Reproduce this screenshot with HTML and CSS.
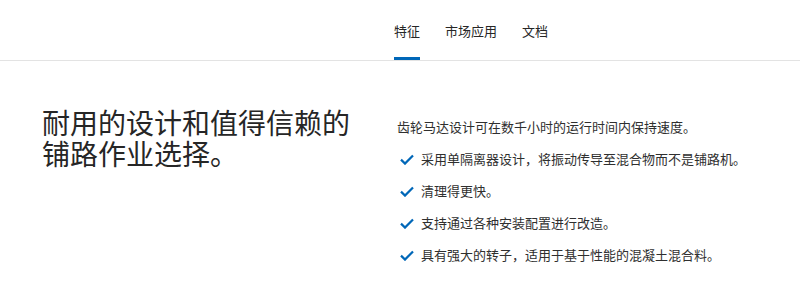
FILE: index.html
```html
<!DOCTYPE html>
<html lang="zh-CN">
<head>
    <meta charset="UTF-8">
    <meta name="viewport" content="width=device-width, initial-scale=1.0">
    <title>铺路作业</title>
    <link rel="stylesheet" href="styles.css">
</head>
<body>
    <header class="tab-bar">
        <nav class="tabs">
            <a class="tab active" href="#">特征</a>
            <a class="tab" href="#">市场应用</a>
            <a class="tab" href="#">文档</a>
        </nav>
    </header>

    <main class="feature">
        <h1 class="feature-title">
            <span>耐用的设计和值得信赖的</span>
            <span>铺路作业选择。</span>
        </h1>
        <div class="feature-body">
            <p class="lead">齿轮马达设计可在数千小时的运行时间内保持速度。</p>
            <ul class="checklist">
                <li>
                    <svg viewBox="0 0 14 11"><path d="M1 5.6l4 4L13 1.4"/></svg>
                    采用单隔离器设计，将振动传导至混合物而不是铺路机。
                </li>
                <li>
                    <svg viewBox="0 0 14 11"><path d="M1 5.6l4 4L13 1.4"/></svg>
                    清理得更快。
                </li>
                <li>
                    <svg viewBox="0 0 14 11"><path d="M1 5.6l4 4L13 1.4"/></svg>
                    支持通过各种安装配置进行改造。
                </li>
                <li>
                    <svg viewBox="0 0 14 11"><path d="M1 5.6l4 4L13 1.4"/></svg>
                    具有强大的转子，适用于基于性能的混凝土混合料。
                </li>
            </ul>
        </div>
    </main>
</body>
</html>
```

FILE: styles.css
```css
body {
    margin: 0;
    font-family: "Noto Sans CJK SC", "Noto Sans", sans-serif;
    color: #262626;
    background-color: #fff;
}
.tab-bar {
    height: 60px;
    border-bottom: 1px solid #e3e3e3;
}
.tabs {
    display: flex;
    gap: 25px;
    height: 100%;
    padding-left: 394px;
}
.tab {
    display: flex;
    align-items: center;
    font-size: 13px;
    color: #262626;
    text-decoration: none;
    border-bottom: 3px solid transparent;
    padding-top: 3px;
    box-sizing: border-box;
}
.tab.active {
    border-bottom-color: #0067b8;
}
.feature {
    display: grid;
    grid-template-columns: 355px 1fr;
    padding: 0 0 0 42px;
}
.feature-title {
    display: flex;
    flex-direction: column;
    margin: 0;
    padding-top: 46px;
    font-size: 28px;
    font-weight: normal;
    color: #262626;
}
.feature-title span {
    display: block;
    height: 31px;
    line-height: 31px;
    overflow: visible;
}
.feature-body {
    padding-top: 56px;
    font-size: 13px;
    line-height: 20px;
    color: #2f2f2f;
}
.lead {
    margin: 0 0 12px;
}
.checklist {
    list-style: none;
    margin: 0;
    padding: 0;
}
.checklist li {
    display: flex;
    align-items: center;
    margin-bottom: 12px;
}
.checklist svg {
    width: 14px;
    height: 11px;
    margin: 0 7px 0 3px;
    fill: none;
    stroke: #0067b8;
    stroke-width: 2.2;
}
```
